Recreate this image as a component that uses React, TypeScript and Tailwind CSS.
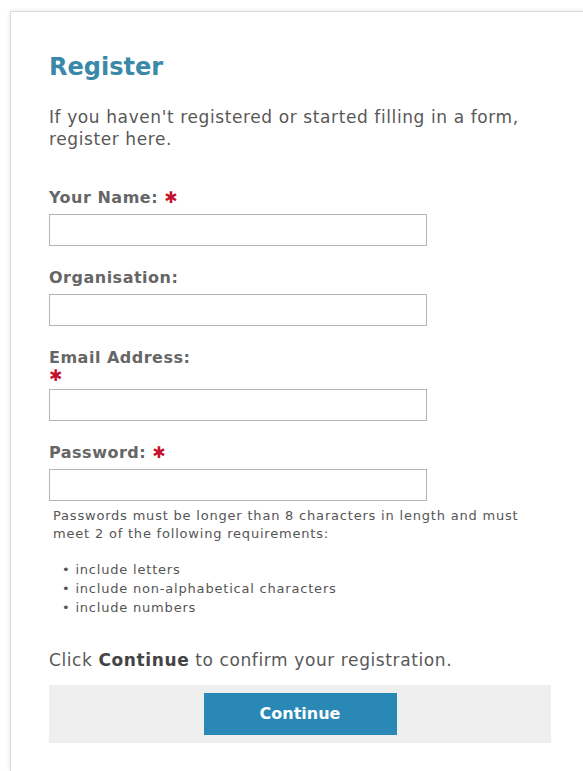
import React from "react";

const font = { fontFamily: '"DejaVu Sans", "Lucida Grande", Verdana, sans-serif' };

const labelCls = "block text-[16px] leading-[18px] tracking-[0.5px] font-bold text-[#666]";
const inputCls = "block w-[378px] h-[32px] border border-[#b5b5b5] bg-white outline-none";

function Required() {
  return <span className="text-[#c4122f] text-[16px] leading-none">✱</span>;
}

function Field({ label, required, wrap }: { label: string; required?: boolean; wrap?: boolean }) {
  return (
    <div className="mb-[23px]">
      <label className={`${labelCls} ${wrap ? "mb-[4px]" : "mb-[7px]"}`}>
        {label}
        {required && !wrap && (
          <>
            {" "}
            <Required />
          </>
        )}
        {required && wrap && (
          <span className="block h-[18px] leading-[18px]">
            <Required />
          </span>
        )}
      </label>
      <input type="text" className={inputCls} />
    </div>
  );
}

export default function App() {
  return (
    <div className="h-[771px] bg-white overflow-hidden pt-[11px] pl-[10px]" style={font}>
      <div className="w-[640px] h-[760px] bg-white border border-b-0 border-[#dadada] shadow-[0_0_4px_rgba(0,0,0,0.12)] pl-[38px] pt-[40px]">
        <h1 className="text-[24px] leading-[30px] font-bold text-[#3a89a8] mb-[24px]">Register</h1>

        <p className="text-[17px] leading-[22px] tracking-[0.6px] text-[#585858] w-[490px] mb-[39px]">
          If you haven't registered or started filling in a form, register here.
        </p>

        <Field label="Your Name:" required />
        <Field label="Organisation:" />
        <Field label="Email Address:" required wrap />

        <div>
          <label className={`${labelCls} mb-[7px]`}>
            Password: <Required />
          </label>
          <input type="password" className={inputCls} />
          <div className="pl-[4px] pt-[6px] text-[13px] leading-[18px] tracking-[0.8px] text-[#555] w-[500px]">
            <p>Passwords must be longer than 8 characters in length and must meet 2 of the following requirements:</p>
            <ul className="mt-[17px] pl-[9px] leading-[19px]">
              <li>• include letters</li>
              <li>• include non-alphabetical characters</li>
              <li>• include numbers</li>
            </ul>
          </div>
        </div>

        <p className="mt-[32px] text-[17px] leading-[22px] tracking-[0.6px] text-[#585858]">
          Click <span className="font-bold text-[#444]">Continue</span> to confirm your registration.
        </p>

        <div className="mt-[14px] w-[502px] h-[58px] bg-[#efefef] flex items-center justify-center">
          <button className="w-[193px] h-[42px] bg-[#2a88b6] text-white text-[16px] font-bold">
            Continue
          </button>
        </div>
      </div>
    </div>
  );
}
